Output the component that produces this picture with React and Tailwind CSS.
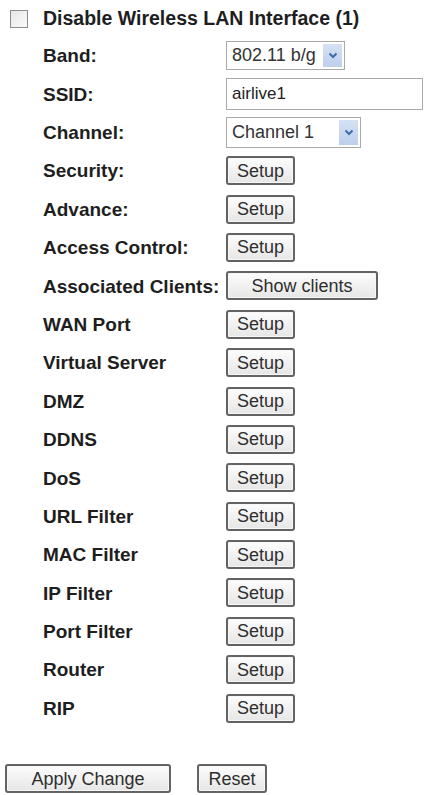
import React from "react";

const font = "font-['Liberation_Sans',Arial,sans-serif]";

function SetupButton({ children = "Setup", className = "w-[69px]" }) {
  return (
    <button
      type="button"
      className={`${className} h-[29px] rounded-[3px] border-2 border-[#636363] bg-gradient-to-b from-[#fdfdfd] to-[#e6e6e6] text-[18px] leading-none text-[#2e2e2e] shadow-[inset_0_0_0_1px_#f7f7f7]`}
    >
      {children}
    </button>
  );
}

function FakeSelect({ value, className }) {
  return (
    <div className={`${className} flex items-center justify-between border border-[#a9a9a9] bg-white pl-[5px] pr-[2px]`}>
      <span className="text-[18px] leading-none text-[#333]">{value}</span>
      <span className="flex h-[calc(100%-4px)] w-[19px] items-center justify-center bg-gradient-to-b from-[#d6e2f4] to-[#bccfeb]">
        <svg width="10" height="7" viewBox="0 0 10 7">
          <path d="M1.5 1.5 L5 5 L8.5 1.5" fill="none" stroke="#3f6aa8" strokeWidth="2" />
        </svg>
      </span>
    </div>
  );
}

function Row({ label, children }) {
  return (
    <div className="grid h-[38.4px] grid-cols-[183px_1fr] items-center pl-[43px]">
      <span className="pt-[2px] text-[19px] font-bold text-[#1e1e1e]">{label}</span>
      <div className="flex items-center">{children}</div>
    </div>
  );
}

const setupRows = [
  "Security:",
  "Advance:",
  "Access Control:",
];

const serviceRows = [
  "WAN Port",
  "Virtual Server",
  "DMZ",
  "DDNS",
  "DoS",
  "URL Filter",
  "MAC Filter",
  "IP Filter",
  "Port Filter",
  "Router",
  "RIP",
];

export default function App() {
  return (
    <div className={`${font} h-[795px] w-[429px] overflow-hidden bg-white`}>
      {/* wireless on/off */}
      <div className="flex h-[36.3px] items-center pl-[10px] pt-[1px]">
        <span className="h-[18px] w-[18px] border border-[#8c8c8c] bg-gradient-to-br from-[#e6e6e6] to-[#fbfbfb]" />
        <span className="ml-[15px] text-[19.5px] font-bold text-[#1e1e1e]">
          Disable Wireless LAN Interface (1)
        </span>
      </div>

      <Row label="Band:">
        <FakeSelect value="802.11 b/g" className="h-[29px] w-[119px]" />
      </Row>
      <Row label="SSID:">
        <div className="flex h-[32px] w-[197px] items-center border border-[#a9a9a9] bg-white pl-[5px] text-[17px] text-[#222]">
          airlive1
        </div>
      </Row>
      <Row label="Channel:">
        <FakeSelect value="Channel 1" className="h-[31px] w-[135px]" />
      </Row>

      {setupRows.map((l) => (
        <Row key={l} label={l}>
          <SetupButton />
        </Row>
      ))}
      <Row label="Associated Clients:">
        <SetupButton className="w-[152px]">Show clients</SetupButton>
      </Row>
      {serviceRows.map((l) => (
        <Row key={l} label={l}>
          <SetupButton />
        </Row>
      ))}

      {/* form actions */}
      <div className="mt-[37px] flex items-center gap-[26px] pl-[5px]">
        <SetupButton className="w-[166px]">Apply Change</SetupButton>
        <SetupButton className="w-[70px]">Reset</SetupButton>
      </div>
    </div>
  );
}
